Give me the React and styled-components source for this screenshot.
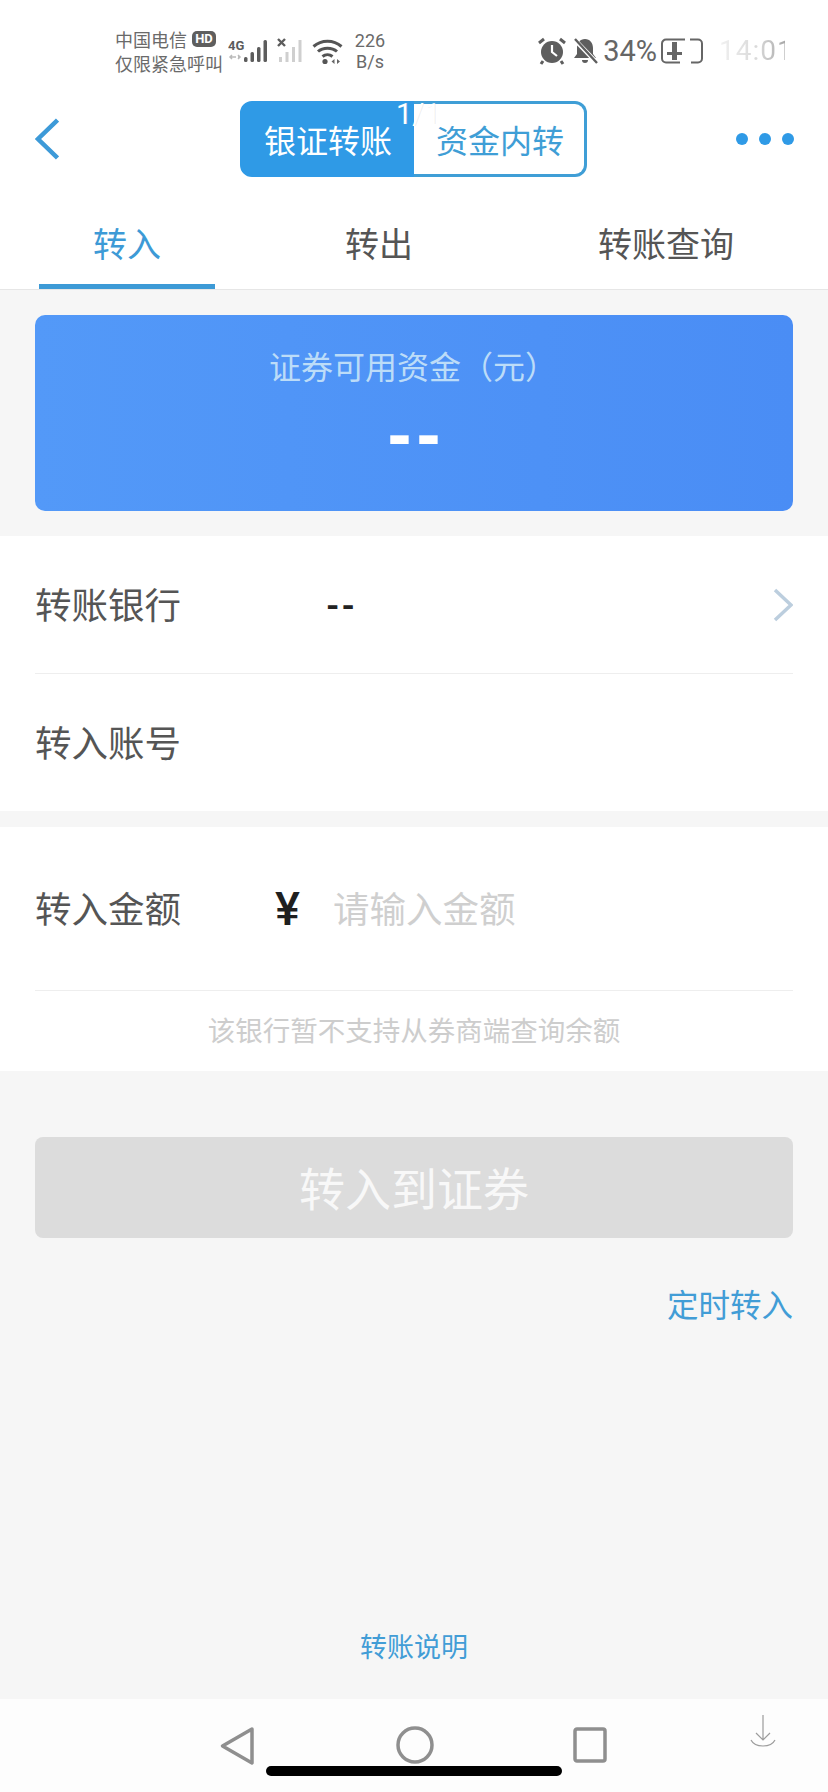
import React from "react";
import styled, { createGlobalStyle } from "styled-components";

const Global = createGlobalStyle`
  html, body { margin: 0; padding: 0; background: #f6f6f6; }
  * { box-sizing: border-box; }
  body { font-family: "Noto Sans CJK SC", "Noto Sans", sans-serif; }
`;

const Page = styled.div`
  width: 828px;
  height: 1792px;
  position: relative;
  display: flex;
  flex-direction: column;
  background: #f6f6f6;
  overflow: hidden;
`;

const Header = styled.header`
  background: #fff;
  border-bottom: 1px solid #e6e6e6;
  height: 290px;
  display: flex;
  flex-direction: column;
`;

const StatusBar = styled.div`
  height: 101px;
  padding: 26px 43px 0 115px;
  display: flex;
  align-items: flex-start;
  justify-content: space-between;
  color: #666;
`;

const StatusGroup = styled.div`
  display: flex;
  align-items: center;
  height: 50px;
`;

const Carrier = styled.div`
  width: 113px;
  font-size: 18px;
  line-height: 24px;
  color: #6a6a6a;
  white-space: nowrap;
`;

const CarrierLine = styled.div`
  display: flex;
  align-items: center;
  height: 24px;
`;

const HdBadge = styled.span`
  margin-left: 5px;
  width: 24px;
  height: 16px;
  border-radius: 5px;
  background: #5e5e5e;
  color: #fff;
  font: 700 13px/16px "Roboto", sans-serif;
  text-align: center;
`;

const StatusIcon = styled.svg`
  display: block;
  flex: none;
  margin-left: ${(p) => p.$ml || 0}px;
`;

const Speed = styled.div`
  margin-left: 10px;
  font: 400 18px/21px "Roboto", sans-serif;
  color: #6a6a6a;
  text-align: center;
  width: 32px;
`;

const Battery = styled.div`
  margin-left: 5px;
  font: 400 29px/50px "Roboto", sans-serif;
  color: #666;
`;

const Clock = styled.div`
  margin-left: 16px;
  width: 66px;
  font: 400 28px/50px "Roboto", sans-serif;
  letter-spacing: 1px;
  background: linear-gradient(90deg, #f1f1f1 0%, #d8d8d8 60%, #a8a8a8 100%);
  -webkit-background-clip: text;
  background-clip: text;
  color: transparent;
`;

const TopBar = styled.div`
  height: 76px;
  display: grid;
  grid-template-columns: 205px 347px 1fr;
  align-items: center;
  padding-left: 35px;
`;

const Switcher = styled.div`
  position: relative;
  height: 76px;
  display: flex;
`;

const SwitchItem = styled.div`
  display: flex;
  align-items: center;
  justify-content: center;
  flex: none;
  font-size: 32px;
  width: ${(p) => (p.$active ? 174 : 173)}px;
  background: ${(p) => (p.$active ? "#2f9ae6" : "#fff")};
  color: ${(p) => (p.$active ? "#fff" : "#3f9ed6")};
  border: 3px solid ${(p) => (p.$active ? "#2f9ae6" : "#3f9ed6")};
  border-left-width: ${(p) => (p.$active ? 3 : 0)}px;
  border-radius: ${(p) => (p.$active ? "12px 0 0 12px" : "0 12px 12px 0")};
  padding-left: 2px;
`;

const PageCount = styled.span`
  position: absolute;
  left: 156px;
  top: -2px;
  font: 400 29px/30px "Roboto", sans-serif;
  color: #fff;
  text-shadow: 1px 0 0 rgba(190, 190, 190, 0.25);
`;

const Dots = styled.div`
  display: flex;
  justify-content: flex-end;
  gap: 11px;
  padding-right: 34px;
`;

const Dot = styled.span`
  width: 12px;
  height: 12px;
  border-radius: 50%;
  background: #2f9ae6;
`;

const Tabs = styled.div`
  flex: 1;
  display: grid;
  grid-template-columns: 176px 176px 246px;
  column-gap: 76px;
  padding-left: 39px;
`;

const Tab = styled.div`
  display: flex;
  align-items: flex-end;
  justify-content: center;
  padding-bottom: 17px;
  height: 112px;
  font-size: 34px;
  line-height: 48px;
  margin-bottom: -1px;
  color: ${(p) => (p.$active ? "#3d9ad6" : "#555")};
  border-bottom: 5px solid ${(p) => (p.$active ? "#3d9ad6" : "transparent")};
`;

const FundCard = styled.section`
  margin: 25px 35px;
  height: 196px;
  border-radius: 10px;
  background: linear-gradient(90deg, #5399f8 0%, #4a8df5 100%);
  display: flex;
  flex-direction: column;
  align-items: center;
`;

const FundTitle = styled.div`
  margin-top: 26px;
  font-size: 32px;
  line-height: 48px;
  color: #bcdcf8;
  white-space: nowrap;
  width: 296px;
  margin-left: 6px;
`;

const FundValue = styled.div`
  margin-top: 4px;
  font: 700 72px/80px "Liberation Sans", sans-serif;
  letter-spacing: 5px;
  padding-left: 5px;
  color: #fff;
`;

const Panel = styled.section`
  background: #fff;
  margin-bottom: ${(p) => p.$mb || 0}px;
`;

const Row = styled.div`
  margin: 0 35px;
  height: ${(p) => p.$h}px;
  display: flex;
  align-items: center;
  border-bottom: ${(p) => (p.$line ? "1px solid #eeeeee" : "none")};
`;

const Label = styled.div`
  width: ${(p) => p.$w}px;
  flex: none;
  font-size: 36.5px;
  line-height: 50px;
  margin-top: -2px;
  color: #555;
`;

const BankValue = styled.div`
  flex: 1;
  font: 700 34px/50px "Roboto", sans-serif;
  letter-spacing: 2px;
  color: #222;
`;

const Yen = styled.div`
  width: 59px;
  flex: none;
  font: 500 47px/50px "Roboto", sans-serif;
  color: #1f1f1f;
`;

const Placeholder = styled.div`
  font-size: 36.5px;
  line-height: 50px;
  margin: -2px 0 0 -1px;
  color: #cfcfcf;
`;

const Hint = styled.div`
  height: 80px;
  display: flex;
  align-items: center;
  justify-content: center;
  padding-bottom: 4px;
  font-size: 27.5px;
  color: #cdcdcd;
`;

const Submit = styled.button`
  display: block;
  margin: 66px 35px 0;
  width: 758px;
  height: 101px;
  border: 0;
  border-radius: 8px;
  background: #dcdcdc;
  color: #f8f8f8;
  font-family: inherit;
  font-size: 46px;
  padding: 0 0 4px;
`;

const TimedLink = styled.div`
  margin-top: 41px;
  padding-right: 35px;
  text-align: right;
  font-size: 31.5px;
  line-height: 48px;
  color: #429dd6;
`;

const Spacer = styled.div`
  flex: 1;
`;

const HelpLink = styled.div`
  height: 102px;
  padding-top: 29px;
  text-align: center;
  font-size: 27px;
  line-height: 40px;
  color: #429dd6;
`;

const NavBar = styled.nav`
  position: relative;
  height: 93px;
  background: #fdfdfd;
  display: flex;
  align-items: flex-start;
  padding-left: 219px;
`;

const NavIcon = styled.svg`
  display: block;
  flex: none;
  margin-left: ${(p) => p.$ml}px;
  margin-top: ${(p) => p.$mt}px;
`;

const HomeIndicator = styled.div`
  position: absolute;
  left: 266px;
  bottom: 16px;
  width: 296px;
  height: 10px;
  border-radius: 5px;
  background: #000;
`;

const Bars = ({ color, x }) => (
  <g fill={color}>
    <rect x={x} y="19" width="3.5" height="5" rx="1.5" />
    <rect x={x + 6.5} y="14" width="3.5" height="10" rx="1.5" />
    <rect x={x + 13} y="9" width="3.5" height="15" rx="1.5" />
    <rect x={x + 19.5} y="2" width="3.5" height="22" rx="1.5" />
  </g>
);

const App = () => (
  <Page>
    <Global />
    <Header>
      <StatusBar>
        <StatusGroup>
          <Carrier>
            <CarrierLine>
              中国电信<HdBadge>HD</HdBadge>
            </CarrierLine>
            <CarrierLine>仅限紧急呼叫</CarrierLine>
          </Carrier>
          <StatusIcon width="44" height="28" viewBox="0 0 44 28">
            <text x="0" y="13" fontFamily="Roboto" fontWeight="700" fontSize="13" fill="#5c5c5c">4G</text>
            <path d="M2 20h6M4 18l-2 2 2 2M12 20h-2M10 18l2 2-2 2" stroke="#bbb" strokeWidth="1.5" fill="none" />
            <g transform="translate(16 1)">
              <Bars color="#5c5c5c" x={0} />
            </g>
          </StatusIcon>
          <StatusIcon $ml={5} width="28" height="28" viewBox="0 0 28 28">
            <path d="M1 2l7 7M8 2l-7 7" stroke="#5c5c5c" strokeWidth="2.4" />
            <g transform="translate(2 1)">
              <rect x="0" y="19" width="3" height="5" fill="#cfcfcf" />
              <rect x="6.5" y="14" width="3" height="10" fill="#cfcfcf" />
              <rect x="13" y="9" width="3" height="15" fill="#cfcfcf" />
              <rect x="19.5" y="2" width="3" height="22" fill="#cfcfcf" />
            </g>
          </StatusIcon>
          <StatusIcon $ml={7} width="32" height="28" viewBox="0 0 32 28">
            <path d="M1.5 9.5C9.5 2.5 21.5 2.5 29.5 9.5" stroke="#555" strokeWidth="3" fill="none" />
            <path d="M6 14.5C11 10 20 10 25 14.5" stroke="#555" strokeWidth="3" fill="none" />
            <path d="M10.5 19.5C13.5 17 17.5 17 20.5 19.5" stroke="#555" strokeWidth="3" fill="none" />
            <circle cx="13" cy="24.5" r="2.6" fill="#555" />
            <path d="M19.5 24.5l3-2.5v5zM28 24.5l-3-2.5v5z" fill="#666" />
          </StatusIcon>
          <Speed>
            226
            <br />
            B/s
          </Speed>
        </StatusGroup>
        <StatusGroup>
          <StatusIcon width="28" height="28" viewBox="0 0 28 28">
            <circle cx="14" cy="15" r="11" fill="#5e5e5e" />
            <path d="M14 8v7l5 4" stroke="#fff" strokeWidth="2.2" fill="none" />
            <path d="M1 6l5-4M27 6l-5-4" stroke="#5e5e5e" strokeWidth="3" />
            <path d="M5 24l-2 3M23 24l2 3" stroke="#5e5e5e" strokeWidth="3" />
          </StatusIcon>
          <StatusIcon $ml={6} width="26" height="28" viewBox="0 0 26 28">
            <path d="M13 2c-5 0-8 4-8 9v6l-3 4h22l-3-4v-6c0-5-3-9-8-9z" fill="#5e5e5e" />
            <path d="M10 23a3 3 0 0 0 6 0z" fill="#5e5e5e" />
            <path d="M2 2l23 24" stroke="#fff" strokeWidth="4.5" />
            <path d="M3 2l22 24" stroke="#5e5e5e" strokeWidth="2.4" />
          </StatusIcon>
          <Battery>34%</Battery>
          <StatusIcon $ml={4} width="42" height="26" viewBox="0 0 42 26">
            <path d="M24 1.5H5a4 4 0 0 0-4 4v15a4 4 0 0 0 4 4h14" stroke="#666" strokeWidth="2" fill="none" />
            <path d="M29 1.5h8a4 4 0 0 1 4 4v15a4 4 0 0 1-4 4h-7" stroke="#666" strokeWidth="2" fill="none" />
            <path d="M11 4h5v10h5v3h-5v5h-5v-5H6v-3h5z" fill="#666" />
          </StatusIcon>
          <Clock>14:01</Clock>
        </StatusGroup>
      </StatusBar>
      <TopBar>
        <svg width="24" height="42" viewBox="0 0 24 42">
          <path d="M22.5 2L3 21l19.5 19" stroke="#3d9ad8" strokeWidth="4.5" fill="none" />
        </svg>
        <Switcher>
          <SwitchItem $active>银证转账</SwitchItem>
          <SwitchItem>资金内转</SwitchItem>
          <PageCount>1/1</PageCount>
        </Switcher>
        <Dots>
          <Dot />
          <Dot />
          <Dot />
        </Dots>
      </TopBar>
      <Tabs>
        <Tab $active>转入</Tab>
        <Tab>转出</Tab>
        <Tab>转账查询</Tab>
      </Tabs>
    </Header>

    <FundCard>
      <FundTitle>证券可用资金（元）</FundTitle>
      <FundValue>--</FundValue>
    </FundCard>

    <Panel $mb={16}>
      <Row $h={138} $line>
        <Label $w={291}>转账银行</Label>
        <BankValue>--</BankValue>
        <svg width="20" height="34" viewBox="0 0 20 34">
          <path d="M2 2l16 15L2 32" stroke="#bccede" strokeWidth="3.5" fill="none" />
        </svg>
      </Row>
      <Row $h={137}>
        <Label $w={291}>转入账号</Label>
      </Row>
    </Panel>

    <Panel>
      <Row $h={164} $line>
        <Label $w={240}>转入金额</Label>
        <Yen>¥</Yen>
        <Placeholder>请输入金额</Placeholder>
      </Row>
      <Hint>该银行暂不支持从券商端查询余额</Hint>
    </Panel>

    <Submit>转入到证券</Submit>
    <TimedLink>定时转入</TimedLink>
    <Spacer />
    <HelpLink>转账说明</HelpLink>

    <NavBar>
      <NavIcon $ml={0} $mt={27} width="36" height="40" viewBox="0 0 36 40">
        <path d="M33 3L3.5 20 33 37z" stroke="#8f8f8f" strokeWidth="3.5" strokeLinejoin="round" fill="none" />
      </NavIcon>
      <NavIcon $ml={141} $mt={27} width="38" height="38" viewBox="0 0 38 38">
        <circle cx="19" cy="19" r="17" stroke="#8f8f8f" strokeWidth="3.5" fill="none" />
      </NavIcon>
      <NavIcon $ml={139} $mt={28} width="34" height="36" viewBox="0 0 34 36">
        <rect x="2" y="2" width="30" height="32" rx="2" stroke="#8f8f8f" strokeWidth="3.5" fill="none" />
      </NavIcon>
      <NavIcon $ml={143} $mt={16} width="26" height="33" viewBox="0 0 26 33">
        <path d="M13 0v25M6 18l7 7 7-7" stroke="#9c9c9c" strokeWidth="1.2" fill="none" />
        <path d="M1 25c4 8 20 8 24 0" stroke="#9c9c9c" strokeWidth="1.2" fill="none" />
      </NavIcon>
      <HomeIndicator />
    </NavBar>
  </Page>
);

export default App;
